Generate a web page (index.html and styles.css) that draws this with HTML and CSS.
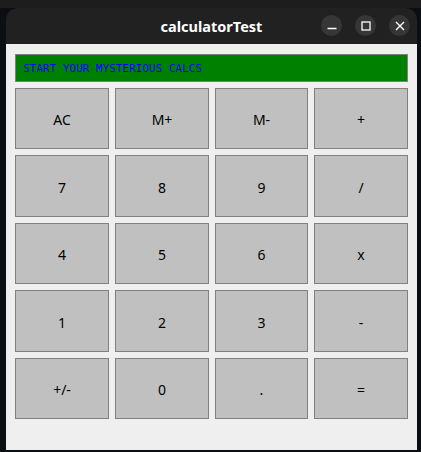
FILE: index.html
```html
<!DOCTYPE html>
<html>
<head>
<meta charset="utf-8">
<title>calculatorTest</title>
<link rel="stylesheet" href="styles.css">
</head>
<body>
<div class="window">
  <div class="titlebar">
    <span class="title">calculatorTest</span>
    <div class="controls">
      <span class="ctl"><svg width="10" height="10" viewBox="0 0 10 10"><path d="M0.5 7.5H9.5" stroke="#fff" stroke-width="1.3"/></svg></span>
      <span class="ctl"><svg width="10" height="10" viewBox="0 0 10 10"><rect x="1" y="1" width="8" height="8" fill="none" stroke="#fff" stroke-width="1.3"/></svg></span>
      <span class="ctl"><svg width="10" height="10" viewBox="0 0 10 10"><path d="M1 1L9 9M9 1L1 9" stroke="#fff" stroke-width="1.4"/></svg></span>
    </div>
  </div>
  <div class="content">
    <div class="display">START YOUR MYSTERIOUS CALCS</div>
    <div class="keys">
      <button class="key">AC</button>
      <button class="key">M+</button>
      <button class="key">M-</button>
      <button class="key">+</button>
      <button class="key">7</button>
      <button class="key">8</button>
      <button class="key">9</button>
      <button class="key">/</button>
      <button class="key">4</button>
      <button class="key">5</button>
      <button class="key">6</button>
      <button class="key">x</button>
      <button class="key">1</button>
      <button class="key">2</button>
      <button class="key">3</button>
      <button class="key">-</button>
      <button class="key">+/-</button>
      <button class="key">0</button>
      <button class="key">.</button>
      <button class="key">=</button>
    </div>
  </div>
</div>
</body>
</html>
```
FILE: styles.css
```css
html, body {
  margin: 0;
  padding: 0;
}
body {
  width: 421px;
  height: 452px;
  overflow: hidden;
  background: linear-gradient(to bottom, #1d1d1d 0, #1d1d1d 8px, #0b0e13 8px);
  padding: 8px 0 0 6px;
  box-sizing: border-box;
}
.window {
  width: 411px;
  height: 442px;
  display: flex;
  flex-direction: column;
  border-radius: 12px 12px 0 0;
  overflow: hidden;
}
.titlebar {
  height: 36px;
  flex: none;
  background: #212121;
  display: flex;
  align-items: center;
  justify-content: center;
  position: relative;
}
.title {
  font-family: "Noto Sans", "DejaVu Sans", sans-serif;
  font-weight: 700;
  font-size: 14.5px;
  color: #ffffff;
  margin-left: 0;
}
.controls {
  position: absolute;
  right: 7px;
  top: 7px;
  display: flex;
  gap: 13px;
}
.ctl {
  width: 21px;
  height: 21px;
  border-radius: 50%;
  background: #363636;
  display: flex;
  align-items: center;
  justify-content: center;
}
.ctl svg {
  display: block;
}
.content {
  flex: 1;
  background: #efefef;
  padding: 10px 9px 0 9px;
  display: flex;
  flex-direction: column;
  gap: 6px;
}
.display {
  height: 28px;
  box-sizing: border-box;
  background: #008000;
  border: 1px solid #808080;
  font-family: "DejaVu Sans Mono", monospace;
  font-size: 11px;
  color: #0000ff;
  padding-left: 7px;
  display: flex;
  align-items: center;
  white-space: pre;
}
.keys {
  display: grid;
  grid-template-columns: 94px 94px 93px 94px;
  grid-template-rows: 61px 62px 61px 62px 61px;
  gap: 6px;
}
.key {
  margin: 0;
  padding: 2px 0 0 0;
  box-sizing: border-box;
  background: #c0c0c0;
  border: 1px solid #808080;
  font-family: "Noto Sans", "DejaVu Sans", sans-serif;
  font-size: 14px;
  color: #000000;
  display: flex;
  align-items: center;
  justify-content: center;
}
```
